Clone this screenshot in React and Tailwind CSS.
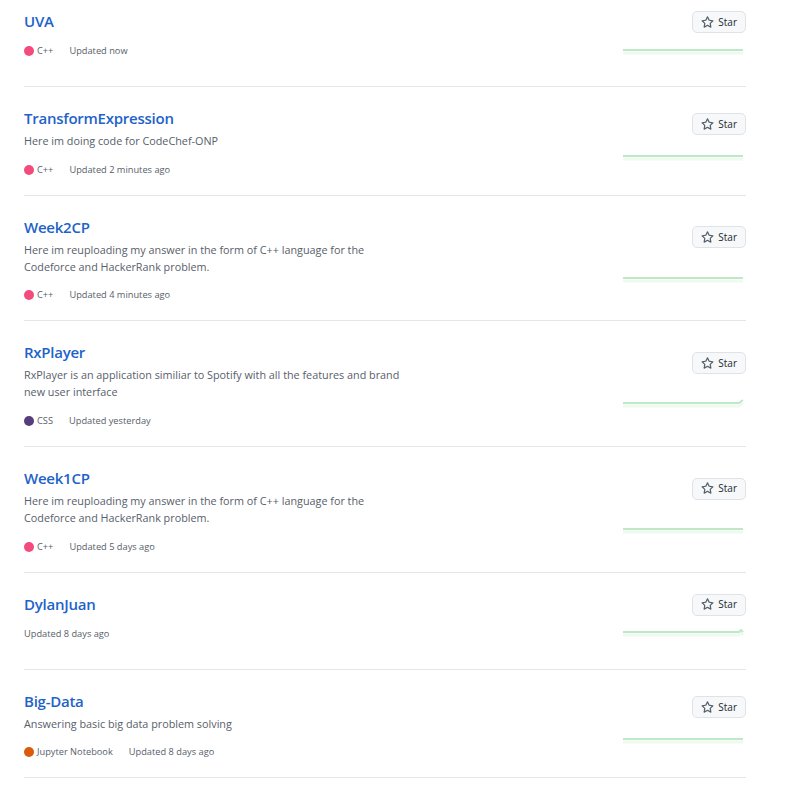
import React from "react";

const repos = [
  { name: "UVA", desc: null, lang: "C++", color: "#f34b7d", updated: "Updated now", spark: "flat" },
  { name: "TransformExpression", desc: ["Here im doing code for CodeChef-ONP"], lang: "C++", color: "#f34b7d", updated: "Updated 2 minutes ago", spark: "flat" },
  { name: "Week2CP", desc: ["Here im reuploading my answer in the form of C++ language for the", "Codeforce and HackerRank problem."], lang: "C++", color: "#f34b7d", updated: "Updated 4 minutes ago", spark: "flat" },
  { name: "RxPlayer", desc: ["RxPlayer is an application similiar to Spotify with all the features and brand", "new user interface"], lang: "CSS", color: "#563d7c", updated: "Updated yesterday", spark: "up" },
  { name: "Week1CP", desc: ["Here im reuploading my answer in the form of C++ language for the", "Codeforce and HackerRank problem."], lang: "C++", color: "#f34b7d", updated: "Updated 5 days ago", spark: "flat" },
  { name: "DylanJuan", desc: null, lang: null, color: null, updated: "Updated 8 days ago", spark: "peak" },
  { name: "Big-Data", desc: ["Answering basic big data problem solving"], lang: "Jupyter Notebook", color: "#da5b0b", updated: "Updated 8 days ago", spark: "flat" },
];

function StarIcon() {
  return (
    <svg width="13" height="13" viewBox="0 0 16 16" fill="#57606a" aria-hidden="true">
      <path d="M8 .25a.75.75 0 0 1 .673.418l1.882 3.815 4.21.612a.75.75 0 0 1 .416 1.279l-3.046 2.97.719 4.192a.751.751 0 0 1-1.088.791L8 12.347l-3.766 1.98a.75.75 0 0 1-1.088-.79l.72-4.194L.818 6.374a.75.75 0 0 1 .416-1.28l4.21-.611L7.327.668A.75.75 0 0 1 8 .25Zm0 2.445L6.615 5.5a.75.75 0 0 1-.564.41l-3.097.45 2.24 2.184a.75.75 0 0 1 .216.664l-.528 3.084 2.769-1.456a.75.75 0 0 1 .698 0l2.77 1.456-.53-3.084a.75.75 0 0 1 .216-.664l2.24-2.183-3.096-.45a.75.75 0 0 1-.564-.41L8 2.694Z" />
    </svg>
  );
}

function Spark({ kind }) {
  let d = "M1 12 L121 12";
  if (kind === "up") d = "M1 12 L117 12 L121 9";
  if (kind === "peak") d = "M1 12 L117 12 L119 10 L121 12";
  return (
    <svg width="124" height="28" viewBox="0 0 124 28" className="block">
      <path d={d} transform="translate(0 3)" fill="none" stroke="#eefaf0" strokeWidth="3" />
      <path d={d} fill="none" stroke="#bfe9c6" strokeWidth="2" strokeLinejoin="round" />
    </svg>
  );
}

function Row({ r }) {
  return (
    <li className="flex justify-between pt-[19px] pb-[18px] border-b border-[#e4e7ea]">
      <div className={`flex flex-col ${r.desc ? "" : "min-h-[59px]"}`}>
        <h3 className="text-[15px] tracking-[-0.25px] leading-[24px] font-semibold text-[#1e63c9] mb-[3px]">{r.name}</h3>
        {r.desc && (
          <p className="text-[10.8px] leading-[16.8px] text-[#57606a] mb-[6px]">
            {r.desc.map((l, i) => (
              <span key={i} className="block">{l}</span>
            ))}
          </p>
        )}
        <div className={`flex items-center text-[9.25px] leading-[14px] text-[#57606a] ${r.desc ? "mt-[7px]" : "mt-[8px]"}`}>
          {r.lang && (
            <span className="flex items-center mr-[16px]">
              <span className="inline-block w-[10px] h-[10px] rounded-full mr-[3px]" style={{ backgroundColor: r.color }} />
              <span>{r.lang}</span>
            </span>
          )}
          <span>{r.updated}</span>
        </div>
      </div>
      <div className={`flex flex-col justify-around items-end ${r.desc ? "pt-[3px]" : ""}`}>
        <button className="flex items-center h-[22px] px-[8px] gap-[4px] rounded-[5px] border border-[#dfe3e7] bg-[#f6f8fa] text-[10px] font-medium text-[#24292f]">
          <StarIcon />
          <span>Star</span>
        </button>
        <Spark kind={r.spark} />
      </div>
    </li>
  );
}

export default function App() {
  return (
    <div className="w-[786px] h-[795px] overflow-hidden bg-white pl-[24px] pr-[40px]" style={{ fontFamily: '"Open Sans", "Noto Sans", sans-serif' }}>
      <ul className="-mt-[10px] w-[722px]">
        {repos.map((r) => (
          <Row key={r.name} r={r} />
        ))}
      </ul>
    </div>
  );
}
